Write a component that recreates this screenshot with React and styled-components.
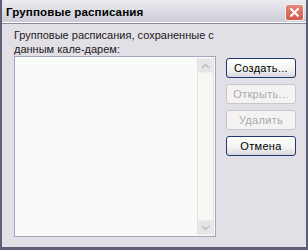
import React from "react";
import styled, { createGlobalStyle } from "styled-components";

const Global = createGlobalStyle`
  html, body { margin: 0; padding: 0; background: #ffffff; }
  body { font-family: "Liberation Sans", Arial, sans-serif; }
`;

const Window = styled.div`
  width: 308px;
  height: 250px;
  box-sizing: border-box;
  display: flex;
  flex-direction: column;
  background: #e3dfe6;
  border-left: 2px solid #5e5e76;
  border-right: 2px solid #5e5e76;
  border-bottom: 1px solid #5e5e76;
  overflow: hidden;
`;

const TitleBar = styled.div`
  height: 23px;
  flex: none;
  display: flex;
  align-items: center;
  justify-content: space-between;
  padding: 0 2px 0 4px;
  background: linear-gradient(#ececf0, #d8d8e0 60%, #cbcbd6);
  border-bottom: 1px solid #8a8a9c;
  box-shadow: inset 0 -1px 0 #ffffff;
`;

const Title = styled.span`
  font-size: 11.6px;
  font-weight: bold;
  color: #000;
  letter-spacing: 0.1px;
`;

const CloseButton = styled.div`
  width: 19px;
  height: 17px;
  box-sizing: border-box;
  border: 1px solid #f2f2f2;
  border-radius: 3px;
  background: linear-gradient(#e48878, #d05a4e);
  display: flex;
  align-items: center;
  justify-content: center;
  margin-top: 1px;
`;

const Body = styled.div`
  flex: 1;
  display: flex;
  flex-direction: column;
  padding: 4px 8px 10px 12px;
  border-bottom: 2px solid #5e5e76;
`;

const Label = styled.div`
  font-size: 11px;
  line-height: 14px;
  color: #1a1a1a;
`;

const Row = styled.div`
  flex: 1;
  display: flex;
  gap: 10px;
`;

const ListBox = styled.div`
  width: 202px;
  box-sizing: border-box;
  border: 1px solid #a4a4bc;
  background: #f8fbf8;
  display: flex;
  justify-content: flex-end;
  padding: 1px;
`;

const ScrollBar = styled.div`
  width: 15px;
  display: flex;
  flex-direction: column;
  justify-content: space-between;
  background: #f6f8f4;
  border-left: 1px solid #e2e2e0;
  border-right: 1px solid #e2e2e0;
`;

const ScrollArrow = styled.div`
  height: 15px;
  box-sizing: border-box;
  background: #e6e6e8;
  border: 1px solid #eeeeee;
  display: flex;
  align-items: center;
  justify-content: center;
`;

const Buttons = styled.div`
  display: flex;
  flex-direction: column;
  gap: 6px;
  padding-top: 2px;
`;

const Button = styled.div`
  width: 70px;
  height: 20px;
  box-sizing: border-box;
  border: 1px solid ${p => (p.disabled ? "#cac6ce" : "#1e3a6e")};
  border-radius: 3px;
  background: ${p =>
    p.disabled
      ? "#f4f3f2"
      : "linear-gradient(#ffffff, #f2f2f0 60%, #d8d6de)"};
  color: ${p => (p.disabled ? "#aca8b0" : "#000")};
  font-size: 11px;
  display: flex;
  align-items: center;
  justify-content: center;
  letter-spacing: 0.3px;
`;

const Arrow = ({ up }) => (
  <svg width="9" height="6" viewBox="0 0 9 6">
    <path
      d={up ? "M1 5 L4.5 1.5 L8 5" : "M1 1 L4.5 4.5 L8 1"}
      fill="none"
      stroke="#c0c0c4"
      strokeWidth="1.6"
    />
  </svg>
);

const App = () => (
  <>
    <Global />
    <Window>
      <TitleBar>
        <Title>Групповые расписания</Title>
        <CloseButton>
          <svg width="11" height="11" viewBox="0 0 11 11">
            <path d="M1.5 1.5 L9.5 9.5 M9.5 1.5 L1.5 9.5" stroke="#fff" strokeWidth="2" />
          </svg>
        </CloseButton>
      </TitleBar>
      <Body>
        <Label>
          Групповые расписания, сохраненные с
          <br />
          данным кале-дарем:
        </Label>
        <Row>
          <ListBox>
            <ScrollBar>
              <ScrollArrow><Arrow up /></ScrollArrow>
              <ScrollArrow><Arrow /></ScrollArrow>
            </ScrollBar>
          </ListBox>
          <Buttons>
            <Button>Создать...</Button>
            <Button disabled>Открыть...</Button>
            <Button disabled>Удалить</Button>
            <Button>Отмена</Button>
          </Buttons>
        </Row>
      </Body>
    </Window>
  </>
);

export default App;
